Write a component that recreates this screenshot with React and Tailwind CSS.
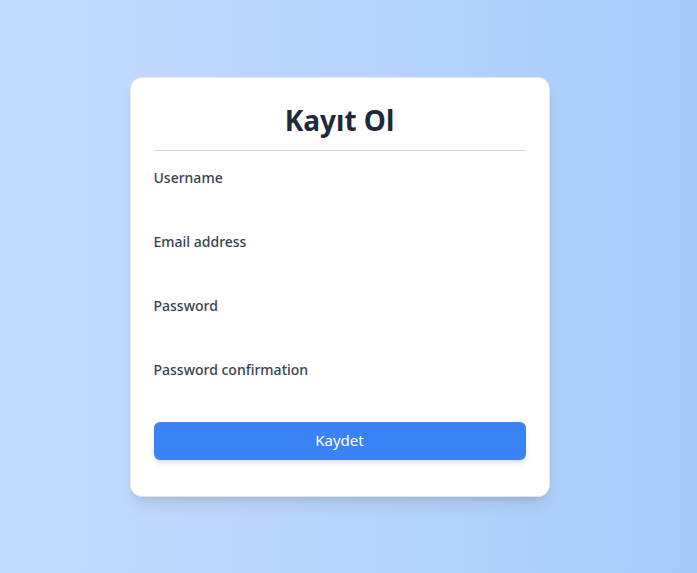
import React from 'react';

const fields = ['Username', 'Email address', 'Password', 'Password confirmation'];

export default function App() {
  return (
    <div
      className="min-h-screen w-full flex items-center justify-center pr-[18px] bg-gradient-to-r from-[#c5ddfd] to-[#a8cbfa]"
      style={{ fontFamily: '"Noto Sans", "Open Sans", sans-serif' }}
    >
      <div className="w-[420px] bg-white rounded-xl border border-gray-200 shadow-lg px-[23px] pt-[24px] pb-[36px]">
        <h1 className="text-[28px] leading-9 font-bold text-gray-800 text-center">Kayıt Ol</h1>
        <div className="h-px bg-gray-300 mt-3 mb-[17px]" />
        <form>
          {fields.map((f) => (
            <div key={f} className="h-16">
              <label className="block text-sm leading-5 font-medium text-gray-700">{f}</label>
            </div>
          ))}
          <button
            type="button"
            className="w-full h-[38px] -mt-[2px] bg-[#3b82f6] text-white text-[15px] rounded-md shadow-md"
          >
            Kaydet
          </button>
        </form>
      </div>
    </div>
  );
}
